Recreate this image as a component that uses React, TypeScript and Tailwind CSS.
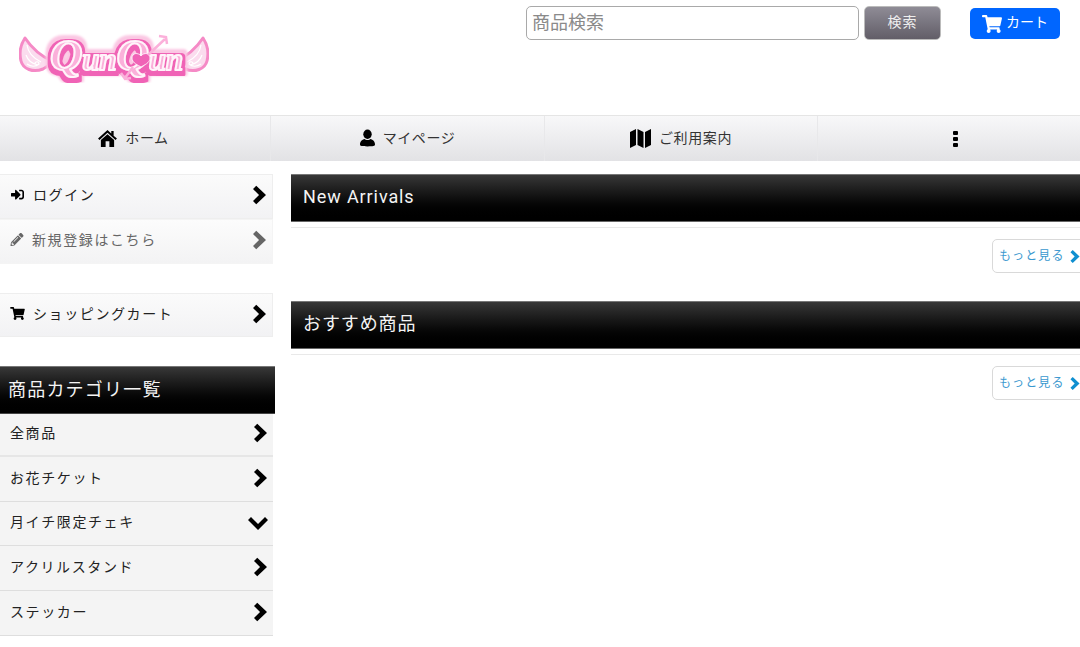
import React from "react";
import { FaShoppingCart, FaPencilAlt, FaSignInAlt } from "react-icons/fa";

const font = { fontFamily: '"Noto Sans CJK JP", "Noto Sans", sans-serif' };
const latin = { fontFamily: 'Roboto, "Noto Sans CJK JP", sans-serif' };

function Logo() {
  const wing = "M6 7 C2 13 0 22 2 30 C4 38 14 42 24 38 C28 36 31 33 33 30 C24 26 14 19 6 7 Z";
  const curl = "M8 14 C9 22 14 27 22 31 M7 24 C9 30 14 33 19 34 M8 33 C12 36 17 36 20 33 C20 30 16 30 16 33";
  return (
    <svg width="190" height="52" viewBox="0 0 190 52" className="block">
      <defs>
        <filter id="logoBand" x="-10%" y="-30%" width="120%" height="160%">
          <feMorphology in="SourceAlpha" operator="dilate" radius="5" result="wide" />
          <feGaussianBlur in="wide" stdDeviation="0.8" result="wideSoft" />
          <feFlood floodColor="#fbc7e3" />
          <feComposite in2="wideSoft" operator="in" result="pale" />
          <feMorphology in="SourceAlpha" operator="dilate" radius="3" />
          <feOffset dy="2" result="mid" />
          <feFlood floodColor="#f063b6" />
          <feComposite in2="mid" operator="in" result="band" />
          <feMerge>
            <feMergeNode in="pale" />
            <feMergeNode in="band" />
            <feMergeNode in="SourceGraphic" />
          </feMerge>
        </filter>
      </defs>
      <g strokeLinejoin="round">
        <g fill="#fbdcee" stroke="#f58ac6" strokeWidth="3">
          <path d={wing} />
          <path d={wing} transform="translate(190,0) scale(-1,1)" />
        </g>
        <g fill="none" stroke="#ffffff" strokeWidth="1.2">
          <path d={curl} />
          <path d={curl} transform="translate(190,0) scale(-1,1)" />
        </g>
      </g>
      <text
        x={31}
        y={39}
        filter="url(#logoBand)"
        fontFamily='"Liberation Serif", serif'
        fontStyle="italic"
        fontWeight={700}
        fontSize={31}
        textLength={133}
        lengthAdjust="spacing"
        fill="#fbb0da"
        stroke="#fff4fa"
        strokeWidth={2}
        strokeLinejoin="round"
      >
        <tspan fontSize={45}>Q</tspan>un<tspan fontSize={45}>Q</tspan>un
      </text>
      <path d="M122 25 C119 21 113 22 113 27 C113 32 119 34 122 36 C125 34 131 32 131 27 C131 22 125 21 122 25 Z" fill="#f063b6" stroke="#fff" strokeWidth="0.8" />
      <path d="M129 24 L146 8 M140 5 L147 6 L148 13 M114 36 L106 47 M102 42 L106 48 L112 47" stroke="#fbb0da" strokeWidth="2.5" fill="none" />
    </svg>
  );
}

const Chevron = ({ cls }: { cls: string }) => (
  <svg viewBox="0 0 14 20" className={cls} fill="currentColor"><path d="M3.5 0 L14 10 L3.5 20 L0 16.5 L6.5 10 L0 3.5 Z" /></svg>
);
const ChevronDown = ({ cls }: { cls: string }) => (
  <svg viewBox="0 0 20 13" className={cls} fill="currentColor"><path d="M0 3 L3 0 L10 7 L17 0 L20 3 L10 13 Z" /></svg>
);
const HomeIcon = () => (
  <svg viewBox="0 0 20 18" className="h-[17px] w-[19px] text-black" fill="currentColor">
    <path d="M10 0 L0 9 L1.5 10.5 L10 3 L18.5 10.5 L20 9 L16.5 6 V1 H14 V3.7 Z" />
    <path d="M10 4.5 L3 10.6 V18 H8 V12 H12 V18 H17 V10.6 Z" />
  </svg>
);
const UserIcon = () => (
  <svg viewBox="0 0 16 18" className="h-[18px] w-[15px] text-black" fill="currentColor">
    <ellipse cx="8" cy="5" rx="4.5" ry="5" />
    <path d="M0 16 C0 12 3 10.5 5 10 C6 11.5 10 11.5 11 10 C13 10.5 16 12 16 16 C16 17.5 14 18 8 18 C2 18 0 17.5 0 16 Z" />
  </svg>
);
const MapIcon = () => (
  <svg viewBox="0 0 21 20" className="h-[20px] w-[21px] text-black" fill="currentColor">
    <path d="M0 4 L6 1 V17 L0 20 Z M7.5 1 L13.5 4 V20 L7.5 17 Z M15 4 L21 1 V17 L15 20 Z" />
  </svg>
);
const DotsIcon = () => (
  <svg viewBox="0 0 5 16" className="h-[16px] w-[5px] text-black" fill="currentColor">
    <rect y="0" width="5" height="4" rx="1" />
    <rect y="6" width="5" height="4" rx="1" />
    <rect y="12" width="5" height="4" rx="1" />
  </svg>
);

function NavItem({ w, icon, label, cls }: { w: string; icon: React.ReactNode; label?: string; cls?: string }) {
  return (
    <a className={`${w} ${cls ?? ""} flex items-center justify-center gap-[8px] border-r border-[#e8e8ea] text-[14px] tracking-[0.6px] text-[#333]`}>
      <span className="pb-[1px]">{icon}</span>
      {label && <span className="pb-[3px]">{label}</span>}
    </a>
  );
}

function SideRow({ icon, label, muted, down, cls }: { icon?: React.ReactNode; label: string; muted?: boolean; down?: boolean; cls: string }) {
  return (
    <a className={`flex items-center justify-between pl-[10px] text-[14px] tracking-[1.6px] ${muted ? "text-[#666]" : "text-[#222]"} ${cls}`}>
      <span className="flex items-center gap-[8px] pb-[4px]">
        {icon}
        <span>{label}</span>
      </span>
      {down ? (
        <ChevronDown cls="mr-[5px] h-[13px] w-[20px] text-black" />
      ) : (
        <Chevron cls={`mb-[3px] mr-[6px] h-[20px] w-[13px] ${muted ? "text-[#666]" : "text-black"}`} />
      )}
    </a>
  );
}

function Section({ title, cls }: { title: string; cls: string }) {
  return (
    <section className={cls}>
      <h2 className="flex h-[48px] items-center border-y border-t-[#777] border-b-[#666] bg-gradient-to-b from-[#383838] to-black pb-[3px] pl-[12px] text-[18px] font-normal tracking-[0.9px] text-[#f4f4f4]" style={latin}>
        {title}
      </h2>
      <div className="mt-[5px] h-[12px] border-t border-[#e9e9e9]" />
      <div className="flex justify-end">
        <a className="flex h-[34px] w-[98px] items-center gap-[5px] rounded-[5px] border border-[#d9d9d9] bg-white pl-[6px] text-[12px] tracking-[1.1px] text-[#3a98cf]">
          <span className="pb-[2px]">もっと見る</span>
          <Chevron cls="h-[13px] w-[10px] text-[#0f8fd0]" />
        </a>
      </div>
    </section>
  );
}

export default function App() {
  return (
    <div className="h-[647px] w-[1080px] overflow-hidden bg-white" style={font}>
      <header className="flex h-[115px] items-start">
        <div className="ml-[19px] mt-[31px] w-[507px]">
          <Logo />
        </div>
        <div className="mt-[6px] flex items-start">
          <input
            readOnly
            placeholder="商品検索"
            className="h-[34px] w-[333px] rounded-[5px] border border-[#a9a9a9] bg-white px-[5px] pb-[4px] text-[18px] text-[#777] placeholder:text-[#8a8a8a]"
          />
          <button className="ml-[5px] h-[34px] w-[77px] rounded-[5px] border border-[#bbb] bg-gradient-to-b from-[#8f8c96] to-[#625e68] pb-[3px] text-[14px] tracking-[1px] text-[#eee]">
            検索
          </button>
          <a className="ml-[29px] mt-[2px] flex h-[31px] w-[90px] items-center justify-center gap-[4px] rounded-[5px] bg-[#0066ff] text-[14px] text-white">
            <FaShoppingCart className="h-[18px] w-[20px]" />
            <span className="pb-[4px]">カート</span>
          </a>
        </div>
      </header>

      <nav className="flex h-[46px] border-t border-[#e5e5e5] bg-gradient-to-b from-[#f8f8f9] to-[#e2e2e5]">
        <NavItem w="w-[271px]" cls="pr-[3px]" icon={<HomeIcon />} label="ホーム" />
        <NavItem w="w-[274px]" icon={<UserIcon />} label="マイページ" />
        <NavItem w="w-[273px]" icon={<MapIcon />} label="ご利用案内" />
        <a className="flex flex-1 items-center justify-center pl-[12px]">
          <DotsIcon />
        </a>
      </nav>

      <div className="mt-[13px] flex items-start">
        <aside className="w-[275px] shrink-0">
          <div className="w-[273px]">
            <SideRow cls="h-[45px] border border-l-0 border-[#eeeeee] bg-gradient-to-b from-[#fbfbfb] to-[#f2f2f4]" icon={<FaSignInAlt className="h-[13px] w-[15px] text-black" />} label="ログイン" />
            <SideRow cls="h-[45px] border border-l-0 border-[#f4f4f4] bg-gradient-to-b from-[#fcfcfc] to-[#f3f3f4]" muted icon={<FaPencilAlt className="h-[13px] w-[14px] text-[#666]" />} label="新規登録はこちら" />
            <SideRow cls="mt-[29px] h-[44px] border border-l-0 border-[#eeeeee] bg-gradient-to-b from-[#fbfbfb] to-[#f2f2f4]" icon={<FaShoppingCart className="h-[13px] w-[15px] text-black" />} label="ショッピングカート" />
          </div>
          <h2 className="mt-[29px] flex h-[48px] items-center border-y border-t-[#777] border-b-[#444] bg-gradient-to-b from-[#383838] to-black pb-[3px] pl-[8px] text-[18px] font-normal tracking-[1.2px] text-[#f4f4f4]">
            商品カテゴリ一覧
          </h2>
          <div className="w-[273px]">
            <SideRow cls="h-[43px] border-b-2 border-[#e6e6e6] bg-[#f4f4f4]" label="全商品" />
            <SideRow cls="h-[45px] border-b border-[#dedede] bg-[#f4f4f4]" label="お花チケット" />
            <SideRow cls="h-[44px] border-b border-[#dedede] bg-[#f4f4f4]" down label="月イチ限定チェキ" />
            <SideRow cls="h-[45px] border-b border-[#dedede] bg-[#f4f4f4]" label="アクリルスタンド" />
            <SideRow cls="h-[45px] border-b border-[#dedede] bg-[#f4f4f4]" label="ステッカー" />
          </div>
        </aside>
        <main className="ml-[16px] w-[799px] shrink-0">
          <Section cls="" title="New Arrivals" />
          <Section cls="mt-[28px]" title="おすすめ商品" />
        </main>
      </div>
    </div>
  );
}
